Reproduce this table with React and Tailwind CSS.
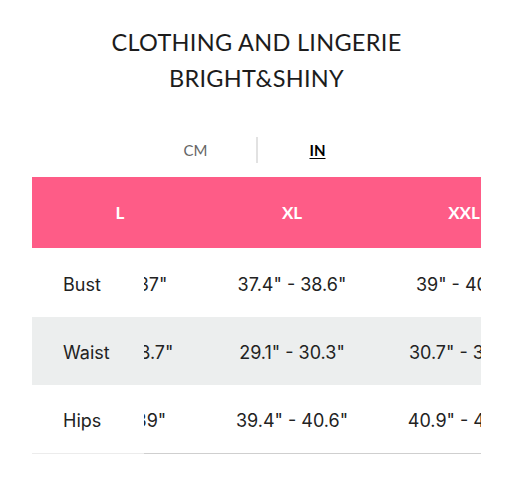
import React from "react";

const SIZES = ["L", "XL", "XXL"];

const ROWS = [
  { label: "Bust", values: ['35.4" - 37"', '37.4" - 38.6"', '39" - 40.9"'], bg: "bg-white" },
  { label: "Waist", values: ['27.6" - 28.7"', '29.1" - 30.3"', '30.7" - 32.3"'], bg: "bg-[#eceeee]" },
  { label: "Hips", values: ['37.8" - 39"', '39.4" - 40.6"', '40.9" - 42.5"'], bg: "bg-white" },
];

export default function App() {
  return (
    <div className="w-[513px] h-[495px] bg-white overflow-hidden font-['Lato',sans-serif]">
      {/* Title */}
      <div className="pt-[24px] text-center text-[23.5px] leading-[36px] text-[#1c1c1c] tracking-[0.3px]">
        <div>CLOTHING AND LINGERIE</div>
        <div>BRIGHT&amp;SHINY</div>
      </div>

      {/* Unit tabs */}
      <div className="mt-[41px] flex justify-center items-center h-[26px]">
        <div className="w-[120px] text-center text-[15px] text-[#666]">CM</div>
        <div className="w-[2px] h-[26px] bg-[#e2e2e2]" />
        <div className="w-[120px] text-center text-[15px] font-bold text-black underline underline-offset-2">
          IN
        </div>
      </div>

      {/* Table */}
      <div className="mt-[14px] ml-[32px] w-[449px] relative overflow-hidden">
        <div className="bg-[#fe5c87] h-[71px] flex pl-[2px]">
          {SIZES.map((s) => (
            <div
              key={s}
              className="w-[172px] shrink-0 flex items-center justify-center text-white text-[17px] font-bold"
            >
              {s}
            </div>
          ))}
        </div>
        <div className="border-b border-[#cfcfcf] font-['Inter',sans-serif]">
          {ROWS.map((r, i) => (
            <div key={r.label} className={`${r.bg} ${i === 0 ? "h-[69px]" : "h-[68px]"} flex pl-[2px] pt-[3px]`}>
              {r.values.map((v, j) => (
                <div
                  key={j}
                  className="w-[172px] shrink-0 flex items-center justify-center text-[18px] text-[#222] whitespace-nowrap"
                >
                  {v}
                </div>
              ))}
            </div>
          ))}
        </div>

        {/* Fixed first column */}
        <div className="absolute left-0 top-[71px] w-[112px] border-b border-[#ececec] font-['Inter',sans-serif]">
          {ROWS.map((r, i) => (
            <div
              key={r.label}
              className={`${r.bg} ${i === 0 ? "h-[69px]" : "h-[68px]"} flex items-center pl-[31px] pt-[3px] text-[18px] text-[#222]`}
            >
              {r.label}
            </div>
          ))}
        </div>
      </div>
    </div>
  );
}
